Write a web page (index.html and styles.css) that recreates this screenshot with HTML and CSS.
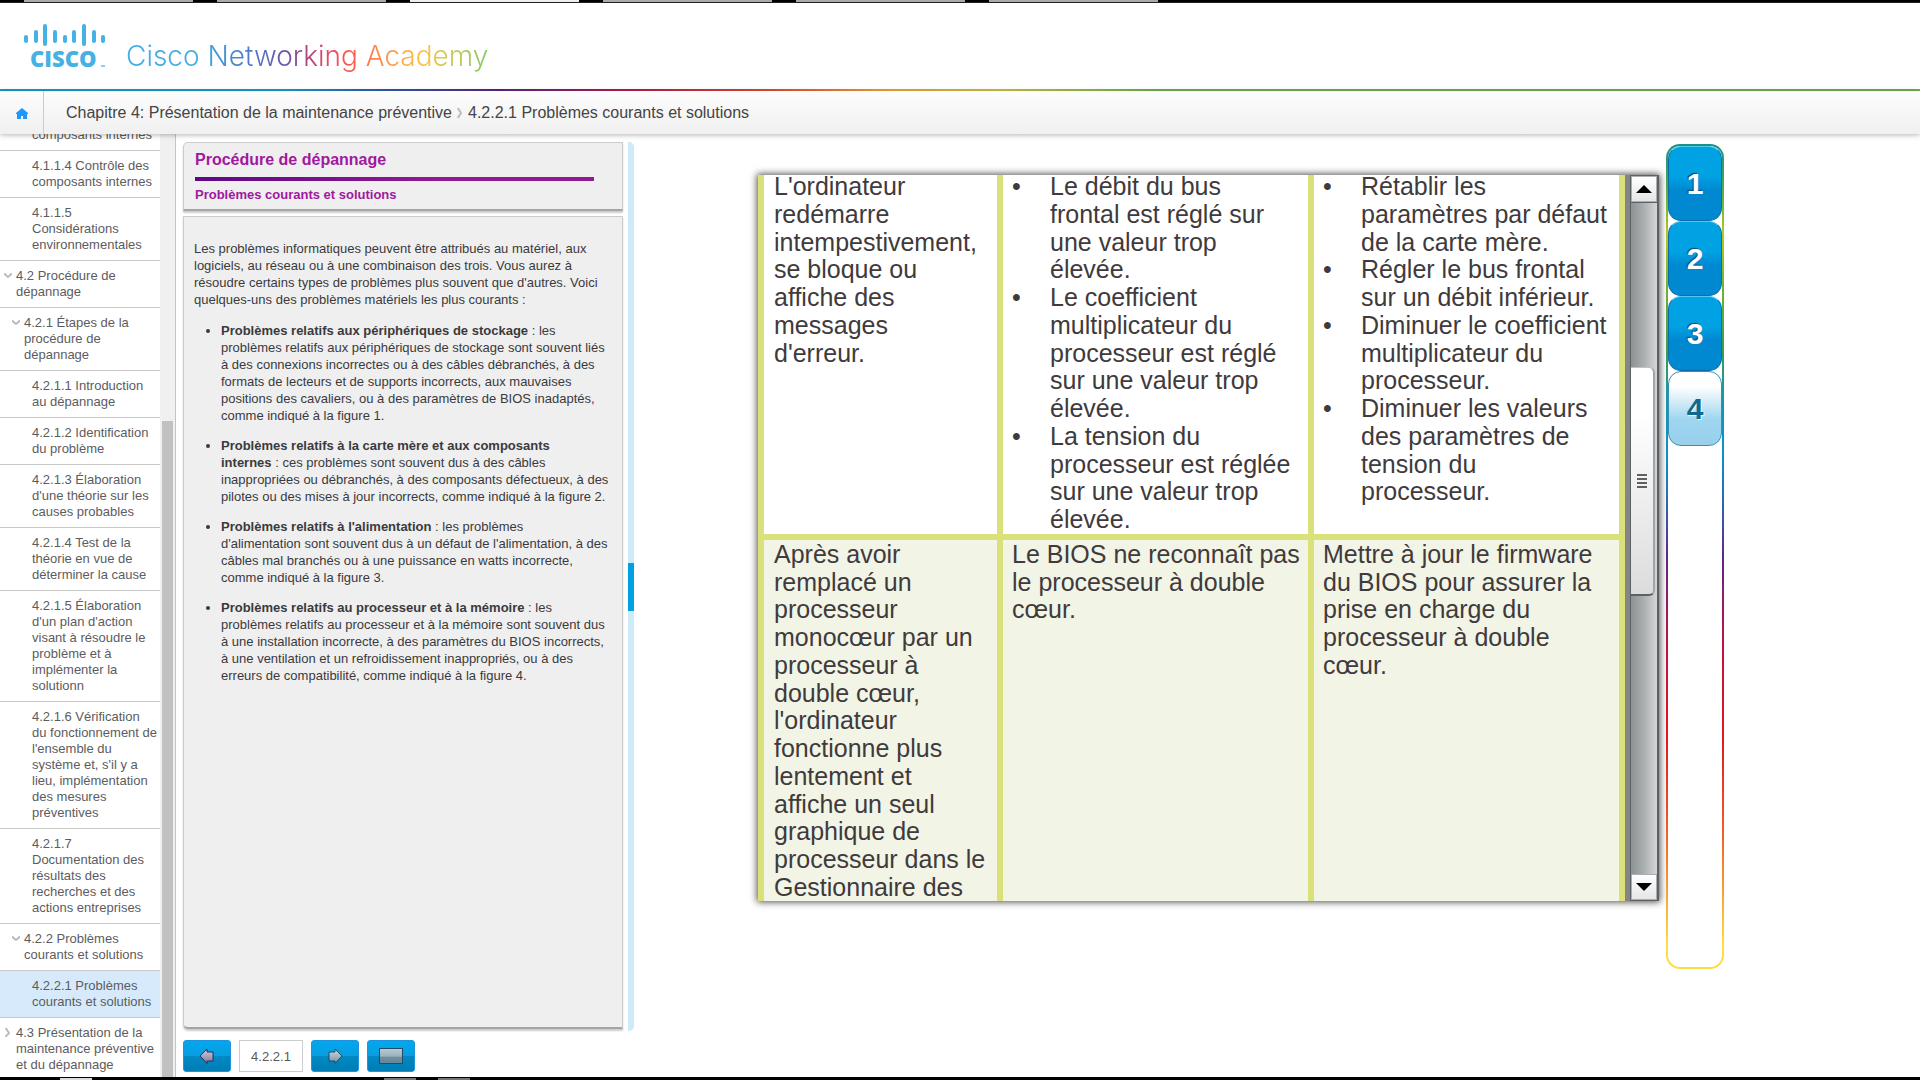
FILE: index.html
```html
<!DOCTYPE html>
<html lang="fr">
<head>
<meta charset="utf-8">
<title>Cisco Networking Academy</title>
<link rel="stylesheet" href="styles.css">
</head>
<body>
<div class="edge edge-top"><i class="tab"></i><i class="tab"></i><i class="tab active"></i><i class="tab"></i><i class="tab"></i><i class="tab"></i></div>

<header class="brand">
  <svg class="logo" width="84" height="52" viewBox="0 0 84 52" aria-label="Cisco">
    <g stroke="#45b1e4" stroke-width="4" stroke-linecap="round">
      <path d="M2 15v4M12 10v9M21 4v18M31 10v9M41 15v4M50 10v9M60 4v18M70 10v9M79 15v4"/>
    </g>
    <text class="logo-name" x="6" y="45">CISCO</text>
    <rect x="77" y="43" width="4" height="2" fill="#8fd0f0"/>
  </svg>
  <span class="brand-name">Cisco Networking Academy</span>
</header>

<nav class="crumbs">
  <a class="home" href="#" aria-label="Accueil"><svg width="12" height="12" viewBox="0 0 12 12"><path d="M6 1L0 6v1h1v5h3V8h4v4h3V7h1V6z" fill="#1e98ff"/><path d="M4 8h4v4H7V9H5v3H4z" fill="#1e98ff"/></svg></a>
  <a class="crumb" href="#">Chapitre 4: Présentation de la maintenance préventive</a>
  <svg width="6" height="12" viewBox="0 0 6 12"><path d="M1 1c1 3 3 4 3 5s-2 2-3 5" fill="none" stroke="#bbb" stroke-width="2"/></svg>
  <a class="crumb" href="#">4.2.2.1 Problèmes courants et solutions</a>
</nav>

<main class="main">
  <nav class="side">
    <ul class="toc">
      <li><a class="leaf" href="#">4.1.1.3 Entretien des composants internes</a></li>
      <li><a class="leaf" href="#">4.1.1.4 Contrôle des composants internes</a></li>
      <li><a class="leaf" href="#">4.1.1.5 Considérations environnementales</a></li>
      <li><a class="level1" href="#"><svg class="chev" viewBox="0 0 10 16"><path d="M1 6c2 0 3 3 4 3s2-3 4-3"/></svg><span>4.2 Procédure de dépannage</span></a></li>
      <li><a class="level2" href="#"><svg class="chev" viewBox="0 0 10 16"><path d="M1 6c2 0 3 3 4 3s2-3 4-3"/></svg><span>4.2.1 Étapes de la procédure de dépannage</span></a></li>
      <li><a class="leaf" href="#">4.2.1.1 Introduction au dépannage</a></li>
      <li><a class="leaf" href="#">4.2.1.2 Identification du problème</a></li>
      <li><a class="leaf" href="#">4.2.1.3 Élaboration d'une théorie sur les causes probables</a></li>
      <li><a class="leaf" href="#">4.2.1.4 Test de la théorie en vue de déterminer la cause</a></li>
      <li><a class="leaf" href="#">4.2.1.5 Élaboration d'un plan d'action visant à résoudre le problème et à implémenter la solutionn</a></li>
      <li><a class="leaf" href="#"><span>4.2.1.6 Vérification<br>du fonctionnement de l'ensemble du système et, s'il y a lieu, implémentation des mesures préventives</span></a></li>
      <li><a class="leaf" href="#">4.2.1.7 Documentation des résultats des recherches et des actions entreprises</a></li>
      <li><a class="level2" href="#"><svg class="chev" viewBox="0 0 10 16"><path d="M1 6c2 0 3 3 4 3s2-3 4-3"/></svg><span>4.2.2 Problèmes courants et solutions</span></a></li>
      <li><a class="leaf current" href="#">4.2.2.1 Problèmes courants et solutions</a></li>
      <li><a class="level1" href="#"><svg class="chev" viewBox="0 0 10 16"><path d="M3 3c0 2 3 4 3 5s-3 2-3 4"/></svg><span>4.3 Présentation de la maintenance préventive et du dépannage</span></a></li>
    </ul>
    <div class="side-scroll"><div class="side-thumb"></div></div>
  </nav>

  <section class="lesson">
    <header class="lesson-head">
      <h1>Procédure de dépannage</h1>
      <div class="rule"></div>
      <h2>Problèmes courants et solutions</h2>
    </header>
    <article class="lesson-body">
      <p>Les problèmes informatiques peuvent être attribués au matériel, aux logiciels, au réseau ou à une combinaison des trois. Vous aurez à résoudre certains types de problèmes plus souvent que d'autres. Voici quelques-uns des problèmes matériels les plus courants :</p>
      <ul>
        <li><strong>Problèmes relatifs aux périphériques de stockage</strong> : les problèmes relatifs aux périphériques de stockage sont souvent liés à des connexions incorrectes ou à des câbles débranchés, à des formats de lecteurs et de supports incorrects, aux mauvaises positions des cavaliers, ou à des paramètres de BIOS inadaptés, comme indiqué à la figure 1.</li>
        <li><strong>Problèmes relatifs à la carte mère et aux composants<br>internes</strong> : ces problèmes sont souvent dus à des câbles<br>inappropriées ou débranchés, à des composants défectueux, à des pilotes ou des mises à jour incorrects, comme indiqué à la figure 2.</li>
        <li><strong>Problèmes relatifs à l'alimentation</strong> : les problèmes<br>d'alimentation sont souvent dus à un défaut de l'alimentation, à des câbles mal branchés ou à une puissance en watts incorrecte,<br>comme indiqué à la figure 3.</li>
        <li><strong>Problèmes relatifs au processeur et à la mémoire</strong> : les problèmes relatifs au processeur et à la mémoire sont souvent dus à une installation incorrecte, à des paramètres du BIOS incorrects, à une ventilation et un refroidissement inappropriés, ou à des erreurs de compatibilité, comme indiqué à la figure 4.</li>
      </ul>
    </article>
    <div class="pager">
      <button class="btn" aria-label="Précédent"><svg width="16" height="16" viewBox="0 0 16 16"><defs><linearGradient id="gp" x2="0" y2="1"><stop offset="0" stop-color="#d2d0e2"/><stop offset="1" stop-color="#76789c"/></linearGradient></defs><path d="M1 8L8 1v3h6v9H8v2.500z" fill="url(#gp)" stroke="#28305e"/></svg></button>
      <input class="page" type="text" value="4.2.2.1" aria-label="Page">
      <button class="btn" aria-label="Suivant"><svg width="16" height="16" viewBox="0 0 16 16"><defs><linearGradient id="gn" x2="0" y2="1"><stop offset="0" stop-color="#cfdadf"/><stop offset="1" stop-color="#7590a0"/></linearGradient></defs><path d="M15 8L8 1v3H2v9h6v2.500z" fill="url(#gn)" stroke="#1f4c66"/></svg></button>
      <button class="btn" aria-label="Plein écran"><svg width="24" height="16" viewBox="0 0 24 16"><defs><linearGradient id="gf" x2="0" y2="1"><stop offset="0" stop-color="#b9cbd3"/><stop offset=".5" stop-color="#9ab2be"/><stop offset=".6" stop-color="#6f8e9e"/><stop offset="1" stop-color="#66879a"/></linearGradient></defs><rect x=".5" y=".5" width="23" height="15" fill="url(#gf)" stroke="#1f4c66"/></svg></button>
    </div>
  </section>
  <div class="splitter"><div class="grip"></div></div>

  <section class="media">
    <div class="viewer">
      <div class="sheet">
        <table class="faults">
          <colgroup><col class="c-problem"><col class="c-cause"><col class="c-fix"></colgroup>
          <tbody>
          <tr>
            <td class="problem">L'ordinateur redémarre intempestivement, se bloque ou affiche des messages<br>d'erreur.</td>
            <td class="cause"><ul>
              <li><span>Le débit du bus<br>frontal est réglé sur une valeur trop<br>élevée.</span></li>
              <li><span>Le coefficient multiplicateur du processeur est réglé sur une valeur trop élevée.</span></li>
              <li><span>La tension du processeur est réglée sur une valeur trop élevée.</span></li>
            </ul></td>
            <td><ul>
              <li><span>Rétablir les paramètres par défaut de la carte mère.</span></li>
              <li><span>Régler le bus frontal sur un débit inférieur.</span></li>
              <li><span>Diminuer le coefficient multiplicateur du processeur.</span></li>
              <li><span>Diminuer les valeurs des paramètres de tension du processeur.</span></li>
            </ul></td>
          </tr>
          <tr class="alt">
            <td class="problem">Après avoir remplacé un processeur monocœur par un processeur à double cœur, l'ordinateur fonctionne plus lentement et affiche un seul graphique de processeur dans le Gestionnaire des</td>
            <td class="cause">Le BIOS ne reconnaît pas le processeur à double cœur.</td>
            <td>Mettre à jour le firmware du BIOS pour assurer la prise en charge du processeur à double cœur.</td>
          </tr>
          </tbody>
        </table>
      </div>
      <div class="scroll">
        <button class="arrow" aria-label="Monter"><svg width="16" height="8" viewBox="0 0 16 8"><path d="M8 0L16 8H0z"/></svg></button>
        <div class="track"><div class="thumb"><i></i><i></i><i></i><i></i></div></div>
        <button class="arrow" aria-label="Descendre"><svg width="16" height="8" viewBox="0 0 16 8"><path d="M0 0h16L8 8z"/></svg></button>
      </div>
    </div>
    <div class="steps">
      <button class="step">1</button>
      <button class="step">2</button>
      <button class="step">3</button>
      <button class="step on">4</button>
    </div>
  </section>
</main>
<div class="edge edge-bottom"><i class="w"></i><i></i><i></i></div>
</body>
</html>
```
FILE: styles.css
```css
* { box-sizing: border-box; }

body {
  margin: 0;
  height: 100vh;
  display: flex;
  flex-direction: column;
  overflow: hidden;
  background: #fff;
  color: #3a3a3d;
  font: 13px/17px "Liberation Sans", Arial, sans-serif;
}

a { color: inherit; text-decoration: none; }
ul { list-style: none; margin: 0; padding: 0; }
button { border: 0; padding: 0; font: inherit; cursor: pointer; }

/* Window edges */
.edge { flex: none; display: flex; height: 3px; background: #000; }
.edge-top { gap: 24px; padding-left: 24px; border-bottom: 1px solid #222; }
.tab { width: 169px; background: #aaa; }
.tab.active { background: #eee; }
.edge-bottom { padding-top: 1px; padding-left: 60px; gap: 22px; }
.edge-bottom i { width: 32px; background: #777; }
.edge-bottom .w { background: #ddd; margin-right: 270px; }

/* Brand */
.brand {
  flex: none;
  height: 88px;
  display: flex;
  align-items: flex-start;
  gap: 18px;
  padding: 19px 0 0 24px;
  border-bottom: 2px solid;
  border-image: linear-gradient(90deg, #149bd7 0, #149bd7 15%, #2f5ab0 20%, #5a2486 26%, #c01848 33%, #e8452f 40%, #f0a030 46%, #c8c23c 52%, #6cb245 60%, #6cb245 100%) 1;
}
.logo { display: block; overflow: visible; }
.logo-name { font: 800 22px "Open Sans", sans-serif; fill: #45b1e4; }
.brand-name {
  padding: 16px 0;
  font: 300 28px/36px Inter, sans-serif;
  color: transparent;
  background: linear-gradient(90deg, #41ade2 0, #41ade2 20%, #4492d4 27%, #5570c0 37%, #6c50a8 44%, #a84680 50%, #ee4a5c 57%, #fd5c4a 63%, #fb8050 68%, #fea848 76%, #fbc340 82%, #d2ca52 88%, #84cc62 100%);
  -webkit-background-clip: text;
  background-clip: text;
}

/* Breadcrumb */
.crumbs {
  flex: none;
  position: relative;
  z-index: 2;
  display: flex;
  align-items: center;
  height: 43px;
  font-size: 16px;
  line-height: 20px;
  color: #444;
  background: linear-gradient(#fdfdfd, #f0f0f0);
  box-shadow: 0 1px 5px rgba(0, 0, 0, .3);
}
.home {
  align-self: stretch;
  display: flex;
  align-items: center;
  justify-content: center;
  width: 44px;
  margin-right: 22px;
  border-right: 1px solid #ccc;
}
.crumbs svg { margin: 0 5px; }

.main { flex: 1; min-height: 0; display: flex; }

/* Contents list */
.side { flex: none; width: 176px; display: flex; overflow: hidden; border-right: 1px solid #c4c4c4; }
.toc { width: 160px; margin-top: -30px; line-height: 16px; color: #5c5c60; }
.toc li { border-bottom: 1px solid #c8c8c8; }
.toc a { display: flex; gap: 3px; padding: 7px 1px 7px 32px; }
.toc .level1 { padding-left: 3px; }
.toc .level2 { padding-left: 11px; }
.toc .current { background: #d6eafb; }
.chev { flex: none; width: 10px; height: 16px; fill: none; stroke: #bbb; stroke-width: 2; }
.side-scroll { flex: 1; display: flex; padding: 287px 2px 0; background: #f0f0f0; }
.side-thumb { flex: 1; background: #c1c1c1; }

/* Lesson text */
.lesson { flex: none; width: 447px; display: flex; flex-direction: column; padding: 8px 0 5px 7px; }
.lesson-head,
.lesson-body { background: #efefef; border: 1px solid #ccc; border-bottom: 2px solid #a5a5a5; box-shadow: 0 2px 2px rgba(0, 0, 0, .2); }
.lesson-head { padding: 7px 28px 6px 11px; border-top-left-radius: 5px; }
.lesson h1,
.lesson h2 { margin: 0; color: #a118a1; }
.lesson h1 { font-size: 16px; line-height: 20px; }
.lesson h2 { font-size: 13px; line-height: 16px; }
.rule { height: 4px; margin: 7px 0 6px; background: linear-gradient(90deg, #5e0788, #901a90 60%); }
.lesson-body { flex: 1; min-height: 0; margin-top: 5px; padding: 23px 11px 0 10px; border-bottom-left-radius: 5px; }
.lesson-body p { margin: 0 0 14px; }
.lesson-body ul { list-style: disc; padding-left: 27px; }
.lesson-body li { margin-bottom: 13px; }

.pager { display: flex; gap: 8px; padding-top: 11px; }
.btn {
  display: flex;
  align-items: center;
  justify-content: center;
  width: 48px;
  height: 32px;
  border: 1px solid #1f93dc;
  border-radius: 3px;
  background: linear-gradient(#00a8ee, #0a9ce0 50%, #0089c4 51%, #007db4);
}
.page { width: 64px; height: 32px; padding: 0; border: 1px solid #ccc; text-align: center; font: inherit; color: #58585b; }

.splitter {
  flex: none;
  width: 6px;
  margin: 8px 0 46px 5px;
  display: flex;
  align-items: center;
  background: #cdeaf8;
  border-radius: 0 5px 5px 0;
}
.grip { width: 6px; height: 48px; background: #00a0e4; }

/* Figure viewer */
.media { flex: 1; min-width: 0; display: flex; align-items: flex-start; padding: 10px 0 0 124px; }
.viewer { flex: 1; max-width: 901px; display: flex; gap: 5px; height: 726px; margin-top: 31px; background: #858585; box-shadow: 0 0 7px 1px rgba(0, 0, 0, .7); }
.sheet { flex: 1; overflow: hidden; }
.faults {
  width: 100%;
  margin-top: -9px;
  table-layout: fixed;
  border-spacing: 6px;
  background: #dae17b;
  font-size: 25px;
  line-height: 1.11;
  color: #403a3c;
}
.c-problem { width: 233px; }
.faults td { padding: 1px 9px 0; vertical-align: top; background: #fff; }
.faults .problem { padding: 1px 11px 0 10px; }
.faults .cause { padding-right: 6px; }
.faults .alt td { background: #f2f4e6; }
.faults li { display: grid; grid-template-columns: 38px 1fr; }
.faults li::before { content: "•"; }

.scroll { flex: none; width: 29px; display: flex; flex-direction: column; background: linear-gradient(90deg, #8d9395, #a8acad 45%, #d6d6d6); border: 1px solid #5c6165; border-right-width: 2px; }
.arrow { flex: none; height: 26px; display: flex; align-items: center; justify-content: center; background: linear-gradient(#fff, #e6e6e6); border: 1px solid #aab0b2; }
.track { flex: 1; padding: 164px 2px 0 0; border-top: 1px solid #5c6165; }
.thumb {
  height: 229px;
  display: flex;
  flex-direction: column;
  align-items: center;
  justify-content: center;
  gap: 2px;
  border: 1px solid #c0c4c6;
  border-right: 2px solid #a0a6a8;
  border-bottom: 2px solid #5c6165;
  border-left: 0;
  border-radius: 0 6px 6px 0;
  background: linear-gradient(#fff 20%, #dcdcdc);
}
.thumb i { width: 10px; height: 2px; background: #5c6165; }

/* Figure selector */
.steps {
  flex: none;
  width: 58px;
  height: 825px;
  margin-left: 7px;
  display: flex;
  flex-direction: column;
  border: 2px solid transparent;
  border-radius: 14px;
  background:
    linear-gradient(#fff, #fff) padding-box,
    linear-gradient(#149488, #4aa850 5%, #b8c81e 11%, #6cb038 18%, #3c9c50 25%, #1a98a0 30%, #0a90d0 38%, #3a58a8 45%, #5c2888 50%, #a01858 57%, #cc1038 63%, #e01820 72%, #f06428 84%, #ffdc44 97%) border-box;
}
.step {
  height: 75px;
  border: 1px solid #0a6ca8;
  border-top-color: #58c4f0;
  border-radius: 13px;
  background: linear-gradient(#00a2e4 40%, #0088d0 60%);
  color: #fff;
  font-size: 30px;
  font-weight: bold;
  text-shadow: -1px -1px 1px #0a4870;
}
.step.on { border-color: #3490b8; background: linear-gradient(#fff 20%, #9ed6f0 65%, #98d0ec); color: #10698f; text-shadow: 1px 1px 1px #fff; }
```
